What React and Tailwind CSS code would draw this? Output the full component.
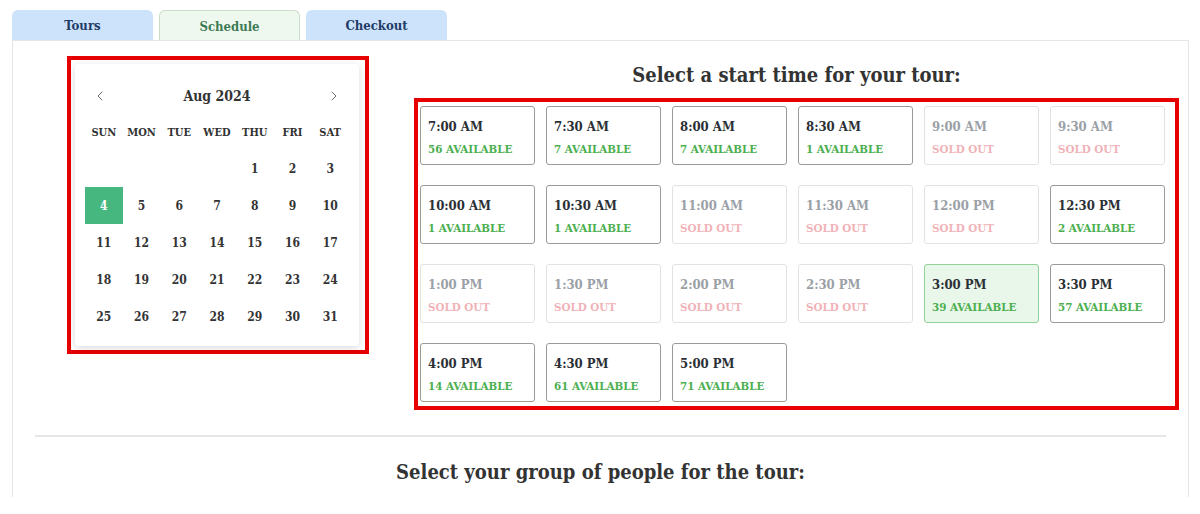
import React from 'react';
import { ChevronLeft, ChevronRight } from 'lucide-react';

const font = { fontFamily: '"DejaVu Serif", serif' };

const days = ['SUN', 'MON', 'TUE', 'WED', 'THU', 'FRI', 'SAT'];

// Aug 2024 starts on a Thursday
const cells = [null, null, null, null, ...Array.from({ length: 31 }, (_, i) => i + 1)];

const slots = [
  { time: '7:00 AM', left: 56 },
  { time: '7:30 AM', left: 7 },
  { time: '8:00 AM', left: 7 },
  { time: '8:30 AM', left: 1 },
  { time: '9:00 AM', left: 0 },
  { time: '9:30 AM', left: 0 },
  { time: '10:00 AM', left: 1 },
  { time: '10:30 AM', left: 1 },
  { time: '11:00 AM', left: 0 },
  { time: '11:30 AM', left: 0 },
  { time: '12:00 PM', left: 0 },
  { time: '12:30 PM', left: 2 },
  { time: '1:00 PM', left: 0 },
  { time: '1:30 PM', left: 0 },
  { time: '2:00 PM', left: 0 },
  { time: '2:30 PM', left: 0 },
  { time: '3:00 PM', left: 39, selected: true },
  { time: '3:30 PM', left: 57 },
  { time: '4:00 PM', left: 14 },
  { time: '4:30 PM', left: 61 },
  { time: '5:00 PM', left: 71 },
];

const Calendar = () => (
  <div className="w-[302px] border-4 border-[#e60000] pl-[4px] pr-[6px] py-[4px]">
    <div className="bg-white shadow-[0_2px_8px_rgba(0,0,0,0.15)] rounded-sm px-[10px] pt-[15px] pb-[11px]">
      <div className="h-[34px] flex items-center justify-between px-[7px] text-[#555]">
        <ChevronLeft size={16} strokeWidth={1.3} />
        <span className="text-[14px] font-bold text-[#333]">Aug 2024</span>
        <ChevronRight size={16} strokeWidth={1.3} />
      </div>
      <div className="grid grid-cols-7">
        {days.map(d => (
          <div key={d} className="h-[37px] pt-[3px] flex items-center justify-center text-[11px] font-bold text-[#333]">
            {d}
          </div>
        ))}
        {cells.map((n, i) => (
          <div
            key={i}
            className={`h-[37px] flex items-center justify-center text-[12px] font-bold ${
              n === 4 ? 'bg-[#46b87f] text-white' : 'text-[#333]'
            }`}
          >
            {n}
          </div>
        ))}
      </div>
    </div>
  </div>
);

const Slot = ({ slot }) => {
  const soldOut = slot.left === 0;
  return (
    <div
      className={`h-[59px] rounded-[3px] border pl-[7px] pt-[12px] ${
        slot.selected
          ? 'bg-[#e9f6ea] border-[#8fd197]'
          : soldOut
          ? 'bg-white border-[#e2e2e2]'
          : 'bg-white border-[#9a9a9a]'
      }`}
    >
      <div className={`text-[13px] leading-[16px] font-bold ${soldOut ? 'text-[#9aa0a6]' : 'text-[#2b2f36]'}`}>
        {slot.time}
      </div>
      <div className={`mt-[7px] text-[11.5px] leading-[14px] font-bold ${soldOut ? 'text-[#f0b3b8]' : 'text-[#4caf50]'}`}>
        {soldOut ? 'SOLD OUT' : `${slot.left} AVAILABLE`}
      </div>
    </div>
  );
};

const App = () => {
  return (
    <div className="h-[514px] bg-white pt-[10px] px-[12px] overflow-hidden font-stretch-condensed" style={font}>
      {/* Tabs */}
      <div className="flex gap-[6px]">
        <div className="w-[141px] h-[30px] pt-[2px] rounded-t-md bg-[#cde3fb] flex items-center justify-center text-[13px] font-bold text-[#1f3b66]">
          Tours
        </div>
        <div className="w-[141px] h-[30px] pt-[2px] rounded-t-md bg-[#eff8ef] border border-b-0 border-[#c8dcc8] flex items-center justify-center text-[13px] font-bold text-[#3d7a55]">
          Schedule
        </div>
        <div className="w-[141px] h-[30px] pt-[2px] rounded-t-md bg-[#cde3fb] flex items-center justify-center text-[13px] font-bold text-[#1f3b66]">
          Checkout
        </div>
      </div>

      {/* Panel */}
      <div className="w-[1177px] h-[457px] border border-b-0 border-[#e6e6e6]">
        <div className="flex items-start pt-[15px] pl-[54px]">
          <Calendar />
          <div className="ml-[45px] w-[765px]">
            <h2 className="mt-[5px] mb-[9px] text-center text-[20px] leading-[28px] font-bold text-[#333]">
              Select a start time for your tour:
            </h2>
            <div className="border-4 border-[#e60000] pl-[2px] pr-[9px] pt-[4px] pb-[4px]">
              <div className="grid grid-cols-[repeat(6,115px)] gap-x-[11px] gap-y-[20px]">
                {slots.map(s => (
                  <Slot key={s.time} slot={s} />
                ))}
              </div>
            </div>
          </div>
        </div>

        <div className="mx-[22px] mt-[25px] h-[2px] bg-[#e6e6e6]" />

        <h2 className="mt-[21px] text-center text-[20px] leading-[28px] font-bold text-[#333]">
          Select your group of people for the tour:
        </h2>
      </div>
    </div>
  );
};

export default App;
